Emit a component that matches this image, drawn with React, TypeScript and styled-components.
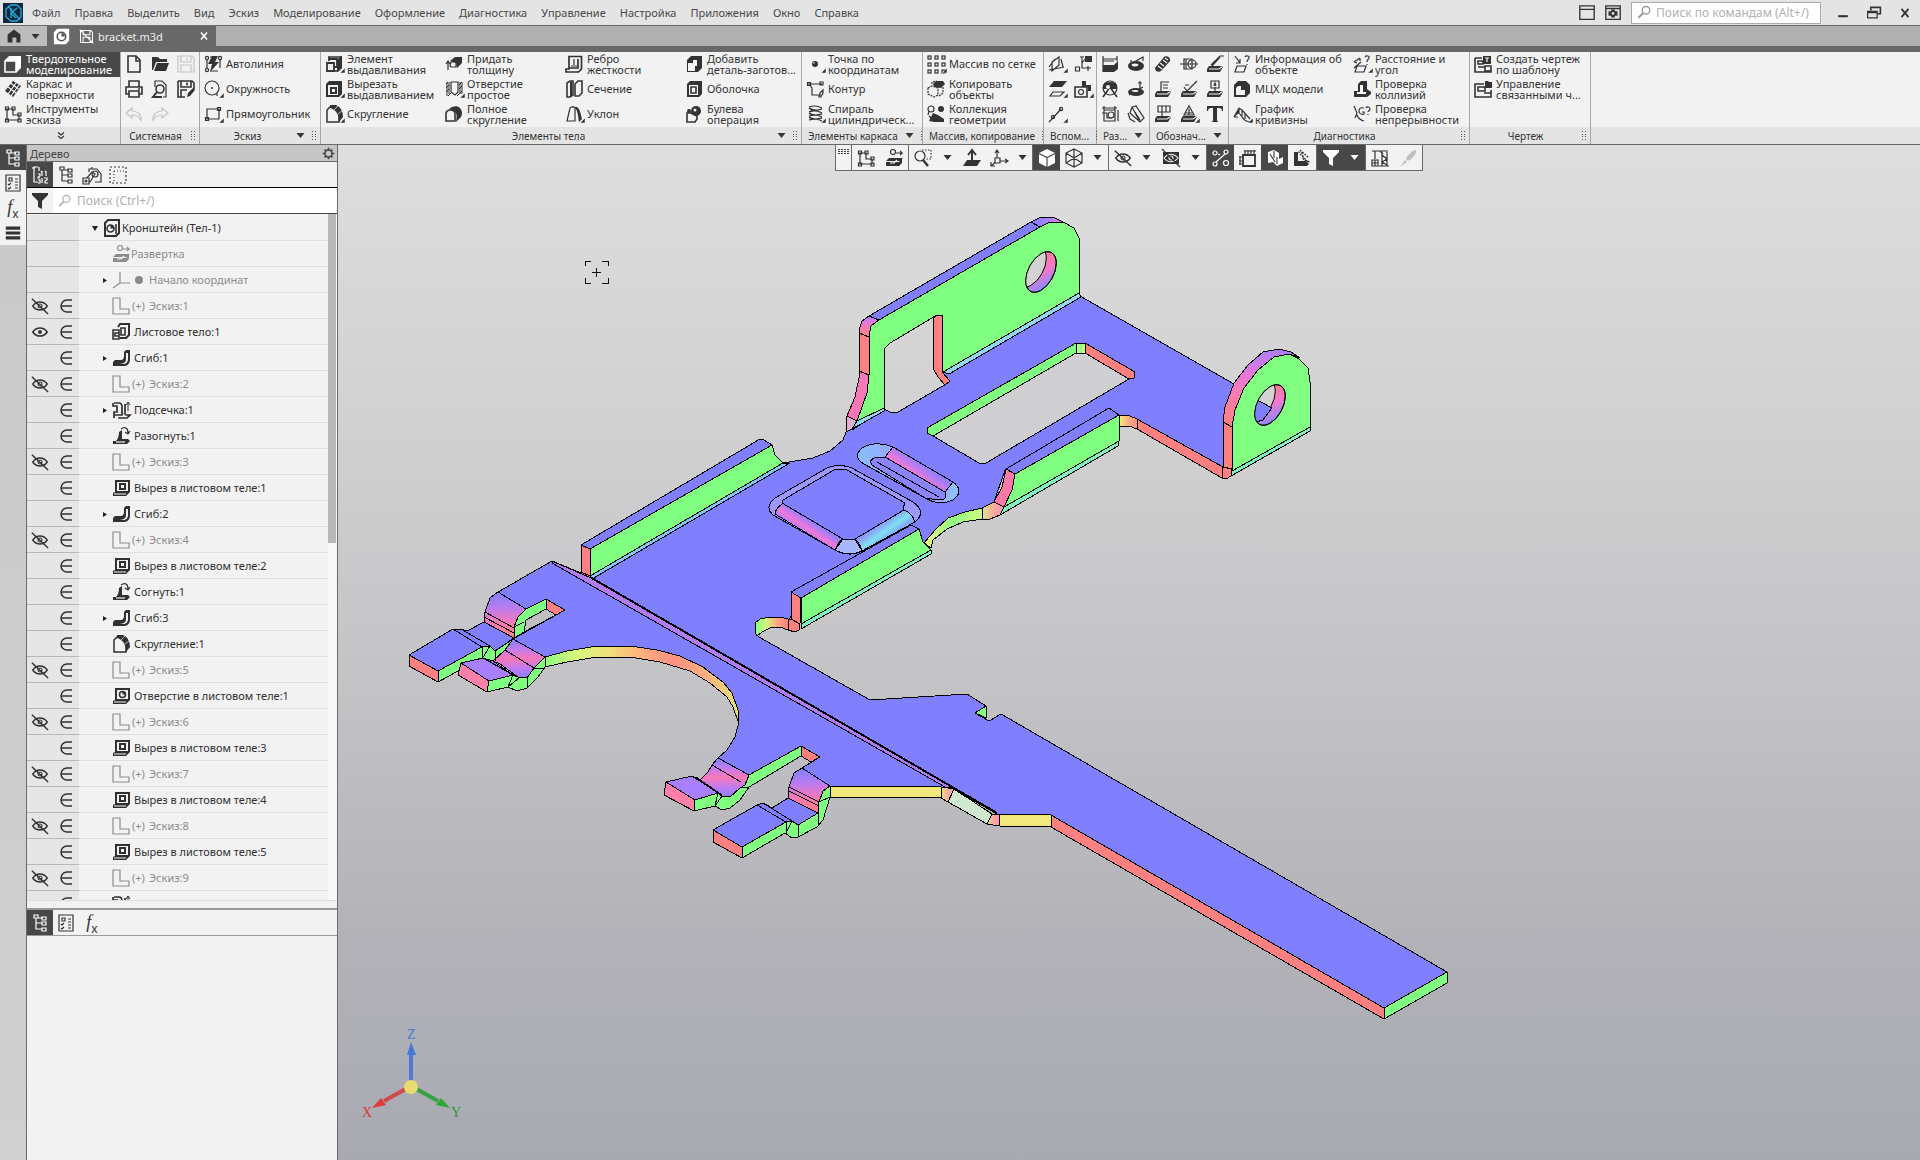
import React from "react";
import styled, { createGlobalStyle, css } from "styled-components";

const INK = "#333333";
const DARK = "#484848";
const LINE = "#6a6a6a";

const GlobalStyle = createGlobalStyle`
  *, *::before, *::after { box-sizing: border-box; }
  body { margin: 0; }
  body, button, input { font-family: "Noto Sans", "Open Sans", sans-serif; font-size: 11px; color: ${INK}; }
  button { border: 0; padding: 0; background: none; text-align: left; }
  svg { display: block; flex: none; }
`;

/* ---------- icons, all on a 20x20 grid ---------- */

const F = { fill: "currentColor", stroke: "none" };
const paper = "#f4f4f4";

const icons: Record<string, React.ReactNode> = {
  solid: <><path {...F} d="M2 6 6 2h12v12l-4 4H2z" /><path d="M6 3h11v11l-3 3H4z" fill="#fff" stroke="none" /><path d="M2 7h11v11H2z" fill="#484848" stroke="#fff" strokeWidth="1.6" /></>,
  surface: <><path {...F} d="M10 2 18 7 10 18 2 12z" /><path stroke={paper} d="M7.500 4 15.500 10M5 8l8 6M13 4 5 15M16 6 8 17" /></>,
  sketchTools: <path d="M4 5v11h12v-5h-6V5zM2.500 3h3v3h-3zM2.500 15h3v3h-3zM15 15h3v3h-3zM15 9h3v3h-3zM9 3h3v3H9z" />,
  newDoc: <path d="M4 2h8l4 4v12H4zM12 2v5h4" strokeWidth="1.600" />,
  open: <path {...F} d="M2 3h6l2 2h7v3H6l-3 8H2zM7 9h12l-3 8H4z" />,
  save: <path d="M2 2h14l2 2v14H2zM5 2v6h10V2M5 18v-7h10v7M11 3.500v3" />,
  print: <path d="M5 8V2h10v6M5 15H2V8h16v7h-3M5 12h10v6H5zM14 10h2" strokeWidth="1.600" />,
  preview: <><path d="M5 8V2h7l4 4v12h-3" /><circle cx="10" cy="10" r="4" strokeWidth="1.600" /><path d="M7 13l-4 5h9" strokeWidth="2" /></>,
  saveAs: <><path d="M2 2h14l2 2v6M5 2v6h10V2M2 2v16h7M5 18v-7h6M11 3.500v3" strokeWidth="1.600" /><path {...F} d="M11 18l1-4 5-5 2 2-5 6z" /></>,
  undo: <path d="M8 4 2 9l6 5v-3c5 0 8 2 9 6 1-7-4-10-9-10z" />,
  redo: <path d="M12 4l6 5-6 5v-3c-5 0-8 2-9 6-1-7 4-10 9-10z" />,
  autoline: <><path {...F} d="M9 2h6l-3 6h4L7 18l2-8H5z" /><path d="M4 6v8M17 6v8M7 3h3M7 17h8" /><circle cx="4" cy="4" r="1.600" /><circle cx="4" cy="16" r="1.600" /><circle cx="17" cy="4" r="1.600" /></>,
  circle: <><circle cx="9" cy="9" r="7" /><circle cx="9" cy="9" r="1" {...F} /><path d="M14 14v3" /></>,
  rect: <path d="M4 5h12v10H4zM2.500 13.500h3v3h-3zM14.500 3.500h3v3h-3z" />,
  extrude: <><path d="M4 3h13v11l-3 3h-4" strokeWidth="1.600" /><path {...F} d="M13 6l4-4h1v12l-5 4z" /><path d="M3 9h7v8H3zM5 3v4M5 5h8v8h-3" strokeWidth="1.800" /></>,
  cut: <><path {...F} d="M2 5 5 2h13v13l-3 3H2z" /><path d="M4 6h10v10H4z" fill={paper} stroke="none" /><path d="M7 9h5v5H7z" strokeWidth="2" /></>,
  fillet: <><path d="M3 18V6l4-4h2c4 3 6 6 6 10v6z" strokeWidth="1.500" /><path {...F} d="M6 1h6c5 2 7 7 7 12l-4 5c0-8-3-12-9-14z" /><path d="M10 6l4-4M14 10l4-3" stroke={paper} strokeWidth="0.700" /></>,
  thicken: <><path {...F} d="M6 7 11 3h7v6l-5 5-1-5z" /><path d="M7 8h5v5H7l-1-1zM4 8v8M2 10l2-3 2 3" /></>,
  holeTool: <><path d="M3 3v14M5 3v12M16 3v12M18 3v12M2 5l2-2M2 9l3-3M2 13l3-3M15 6l3-3M15 10l3-3M4 17l3-3M13 17l5-5" strokeWidth="1" /><path d="M7 3h7v10l-3 3-4-3z" fill={paper} /></>,
  fullFillet: <><path d="M2 17V9c1-4 8-4 9 0v8z" strokeWidth="1.600" /><path {...F} d="M5 5c3-3 8-4 11-1 3 4 2 7 1 9l-5 5c1-6 1-9-2-11-2-1-4-2-5-2z" /></>,
  rib: <><path d="M5 2.500h12.500V15l-3 3H2v-3h3zM5 14h9V5" strokeWidth="1.700" /><path d="M10 5v6M7 12h6" /></>,
  section: <><path d="M3 4 6 2h3v14l-3 2H3zM11 5l3-3h4v12l-3 3h-4z" strokeWidth="1.600" /><path d="M7 3v14" strokeWidth="2" /></>,
  draft: <><path d="M3 17 6 4c2-2 4-2 5 0v13z" /><path {...F} d="M6 3h7c3 2 4 8 5 12l-3 3c-1-6-1-11-4-14z" /></>,
  addPart: <><path {...F} d="M3 6 7 2h11v12l-4 4H3z" /><path d="M4 9h5V6h4v6h-2v5H4z" fill={paper} stroke="none" /></>,
  shell: <><path {...F} d="M3 5 6 2h12v13l-3 3H3z" /><path d="M5 6h9v10H5z" fill={paper} stroke="none" /><path d="M7 8h5v6H7z" strokeWidth="1.600" /></>,
  boolean: <><path d="M3 9h4l6 3v3l-2 3H3z" strokeWidth="1.600" /><circle cx="12" cy="7" r="5" {...F} /><circle cx="11" cy="6" r="1.500" fill={paper} stroke="none" /><circle cx="5" cy="7" r="2" {...F} /></>,
  point: <><circle cx="10" cy="10" r="3" {...F} /><circle cx="9" cy="9" r="0.800" fill={paper} stroke="none" /></>,
  contour: <path d="M17 5H4l3 4v7h9M2.500 3.500h3v3h-3zM15 3h3v3h-3zM15 14l3-3v3l-2 4h-2z" />,
  spiral: <path d="M4 3c5-2 11 0 13 1M4 4c3 3 11 2 13 1M4 8c5-3 11 0 13 1M4 9c3 3 11 2 13 1M4 12c5-2 11 0 13 1M4 13c3 3 11 2 13 1M4 16c5-2 11 0 13 1M17 5 4 8M17 10 4 12M17 14 4 16" />,
  array: <>{[3, 10, 17].map((x) => [3, 10, 17].map((y) => <rect key={`${x}${y}`} x={x - 1} y={y - 1} width="3" height="3" />))}</>,
  copy: <><path d="M2 9l4-2 6 2v7l-4 2-6-3zM6 5V3l5-1M17 8v6l-4 3" strokeDasharray="2 1" /><path {...F} d="M7 5l3-3h7l2 3-4 4-7-1z" /></>,
  collection: <><circle cx="5" cy="5" r="3" /><path d="M3 7 2 11" /><circle cx="15" cy="5" r="3" {...F} /><path {...F} d="M7 9l5 2 6 4v3H8l-5-1z" /><path d="M3 12l5 5" /></>,
  plane1: <path d="M5 8 12 3v8l-7 6zM2 16l15-3M14 5l2 8M2 13l6-8" />,
  plane2: <><path {...F} d="M7 2h13l-5 6H2z" /><path d="M6 13h11l-4 4H3z" /></>,
  axisPt: <><path d="M4 16 14 5M2 18l2-2" /><circle cx="6" cy="13" r="1.600" /><circle cx="14" cy="5" r="1.600" /></>,
  lcs: <><path d="M9 4v10h9M9 9l4-5M2.500 13h4v4h-4zM15 12v5" /><path {...F} d="M12 2h7v6h-7z" /><path d="M7 3h4" /></>,
  camera: <><path d="M2 8h12v10H2z" strokeWidth="1.600" /><circle cx="8" cy="13" r="2.500" /><path {...F} d="M9 2h4v4h5v6h-3V8H9z" /></>,
  dimLin: <><path d="M3 2v16M17 2v5M3 5h14M3 7h11" /><path {...F} d="M3 11h11l4-4v8l-4 3H3z" /></>,
  dimRad: <><path d="M3 11l14-8v4M5 8v-2" /><ellipse cx="10" cy="12" rx="8" ry="5" {...F} /><ellipse cx="9" cy="11" rx="4" ry="2" fill={paper} /></>,
  dimAng: <><circle cx="10" cy="9" r="7" /><path d="M10 8 3 18M10 8l7 10" strokeWidth="1.600" /><path {...F} d="M3 6c2-4 12-4 14 0v4H3z" /><circle cx="8" cy="8" r="2" fill={paper} stroke="none" /></>,
  dimDia: <><path d="M14 2v9M12 4h4M3 16l14-8" /><ellipse cx="10" cy="13" rx="8" ry="4" {...F} /><ellipse cx="9" cy="12" rx="4" ry="1.600" fill={paper} /></>,
  dimAuto: <><path d="M4 6h11v11H4zM4 2v4M15 2v4M2 4h15M18 6v11M2 9h5v5h5" /><circle cx="11" cy="11" r="3" /></>,
  dimNote: <path d="M6 3l4-1 8 12-4 4L4 9zM6 3l8 15M9 8l5 8M2 9l2 6 5 3" />,
  screw: <><path {...F} d="M2 14 11 3c3-2 7 1 6 4L8 17c-3 2-6 0-6-3z" /><path d="M5 12l4 3M7 9l4 3M10 6l4 3M12 4l3 2" stroke={paper} /></>,
  cylinder: <><path d="M5 5h8v10H5z" /><path d="M1 10h18M7 5v10" /><circle cx="13" cy="10" r="4" /></>,
  plate: <path {...F} d="M4 12h12l2 1-3 5H2v-3z" />,
  letterT: <path {...F} d="M2 2h16v5h-1c0-2-1-3-3-3h-2v12c0 1 1 2 2 2H6c1 0 2-1 2-2V4H6C4 4 3 5 3 7H2z" />,
  info: <path d="M3 2l5 7M8 5v4H4M5 12h9l-2 6H3zM13 3c1-2 5-1 4 1s-2 2-2 4M15 10v1" />,
  mcx: <><path {...F} d="M2 6 6 2h8l4 4v8l-4 4H2z" /><path d="M4 9l2-2h3v4h4v5H4z" fill={paper} stroke="none" /></>,
  graph: <path d="M2 13 7 4l3 2 8 9M2 13c4-5 5-5 8 0s5 4 8 5M4 11l3-5M7 9V5M10 12V6M13 15V9M2 13h4" />,
  distance: <path d="M2 8l6-4M2 8l3 1M8 4v3M5 12h9l-2 6H3zM13 3c1-2 5-1 4 1s-2 2-2 4M15 10v1M2 14 9 8" />,
  collision: <><path {...F} d="M2 12h4V5l3-3h6v8l4 3v2l-4 3H2z" /><path d="M8 6h3v7h3v2H5v-2h3z" fill={paper} stroke="none" /></>,
  continuity: <path d="M2 2l3 7-2 5M5 11c1 3 3 5 7 6M12 4c-4-1-5 1-5 3s2 4 5 3V8h-2M14 4c1-2 4-1 4 1s-2 2-2 3M16 10v1" />,
  drawing1: <><path d="M2 4h7M2 4v14h16v-6M5 7h5v3H5zM5 13h7M12 12v5h6v-5z" strokeWidth="1.600" /><path {...F} d="M10 2h8v8h-8z" /><path d="M12 4h4M14 4v4" stroke={paper} /></>,
  drawing2: <><path d="M11 5H2v13h16v-7M5 8h7v4H5zM11 14h7" strokeWidth="1.600" /><path {...F} d="M12 2h3l1 1h3v6h-7z" /></>,
  home: <path {...F} d="M10 2 18 8v10h-5v-6H8v6H2V8z" />,
  docPart: <><path d="M3 5 6 2h11v13l-3 3H3z" strokeWidth="2" /><path d="M14 6v10" strokeWidth="1.600" /><circle cx="8.500" cy="10.500" r="3.500" strokeWidth="1.600" /><path {...F} d="M8.500 7a3.500 3.500 0 0 1 3.500 3.500H8.500z" /></>,
  docTab: <><path {...F} d="M1 5 5 1h14v14l-4 4H1z" /><circle cx="10" cy="10" r="5" stroke="#555555" strokeWidth="1.800" /><path d="M10 6a4 4 0 0 1 4 4h-4z" fill="#555555" stroke="none" /></>,
  noSave: <path d="M3 3h12l2 2v12H3zM6 3v5h8V3M6 17v-6h8v6M2 2l16 16" />,
  tree: <path d="M6 5v11h6M6 10h6M7 5h6M4 2h4v3H4zM12 4h4v3h-4zM12 9h4v3h-4zM12 15h4v3h-4z" />,
  params: <path d="M3 2h14v16H3zM6 5h3v3H6zM12 6h3M12 9h3M5 11l1 1 2-2M5 15l1 1 2-2M12 12h3M12 15h3" />,
  bars: <path {...F} d="M1 2h18v4H1zM1 8h18v4H1zM1 14h18v4H1z" />,
  gear: <><circle cx="10" cy="10" r="5.500" strokeWidth="2.400" /><path strokeWidth="2.600" d="M10 1v4M10 15v4M1 10h4M15 10h4M4 4l2 2M14 14l2 2M16 4l-2 2M6 14l-2 2" /></>,
  treeNum: <path d="M8 2H4v15h4M2 3h3M12 6v5M11 7l1-1M16 6v5M15 7l1-1M12 13v5M14 13h3v2l-2 1v2h3M9 2v4M8 9h2v2l-2 1v1h2M8 15h2v3H8" />,
  treeDocs: <><path d="M7 7V4h8l4 5v8h-6M10 4V2M4 14l6-7 3 2-5 8z" /><circle cx="13" cy="9" r="3" /><path d="M1 13h6v6H1z" fill={paper} /><circle cx="4" cy="16" r="1" /></>,
  marquee: <><path d="M2 2h16v16H2z" strokeDasharray="2 2" /><path d="M6 6h12M6 6v12" strokeDasharray="1 2" /></>,
  funnel: <path {...F} d="M2 2h16v2l-6 6v8l-4-2v-6L2 4z" />,
  search: <><circle cx="12" cy="7" r="5" strokeWidth="1.800" /><path d="M8 11l-6 6" strokeWidth="2.600" /></>,
  eye: <><path d="M2 10c4-6 12-6 16 0-4 6-12 6-16 0z" strokeWidth="1.800" /><circle cx="10" cy="10" r="2.200" {...F} /></>,
  eyeOff: <><path d="M2 10c4-6 12-6 16 0-4 6-12 6-16 0z" strokeWidth="1.600" /><circle cx="10" cy="10" r="2.200" /><path d="M1 2l18 17" strokeWidth="1.600" /></>,
  member: <path d="M16 4h-5a6 6 0 0 0 0 12h5M5 10h11" strokeWidth="1.500" />,
  sketch: <path d="M2 2h7v11h9v5H2z" />,
  origin: <path d="M9 2v11h10M9 13l-7 5" />,
  unfold: <><circle cx="9" cy="4" r="2.500" /><path d="M12 5h6l-2-2M18 5l-2 2" /><path {...F} d="M5 10h14l-3 3H2zM2 14h13l3-3v4l-3 3H2z" /><path d="M6 15h4l3-3" stroke={paper} /></>,
  sheet: <><path d="M7 5 9 2h9v11l-3 3H9" strokeWidth="2" /><path d="M10 6h4v7h-4zM2 8h6v9H2zM4 11h4v3H4z" strokeWidth="1.600" /></>,
  bend: <><path {...F} d="M2 14l2-2h6c2 0 3-2 3-4V4l2-2h4v9c0 4-2 7-6 7H2z" /><path d="M15 5h2v6c0 3-2 5-5 5H4c6 0 11 0 11-5z" fill={paper} stroke="none" /></>,
  jog: <><path d="M3 3h5c3 0 3 2 3 4v8H3v3M2 3v3h4v6H3v3M13 13l2 2h4l-3 3H7M14 4v9" strokeWidth="1.700" /><path d="M17 11V2M15 5l2-3 2 3" strokeWidth="1" /></>,
  unbend: <><path {...F} d="M2 15h3c2-2 3-5 3-9l3-2v9h6l2 2-3 3H2z" /><path d="M10 3c4-3 7-1 7 4M14 6l3 2 2-3" /><path d="M5 16h9" stroke={paper} /></>,
  sheetCut: <><path {...F} d="M4 2h15v12l-4 4H2v-3l2-1z" /><path d="M6 4h11v9H6z" fill={paper} stroke="none" /><path d="M3 16h12" stroke={paper} strokeWidth="1" /><path d="M9 6h5v5H9z" strokeWidth="2" /></>,
  sheetHole: <><path {...F} d="M4 2h15v12l-4 4H2v-3l2-1z" /><path d="M6 4h11v9H6z" fill={paper} stroke="none" /><path d="M3 16h12" stroke={paper} strokeWidth="1" /><circle cx="11.500" cy="8.500" r="3" strokeWidth="1.600" /><path {...F} d="M11.500 5.500a3 3 0 0 1 3 3h-3z" /></>,
  window: <path d="M2 2h16v15H2zM2 6h16" strokeWidth="1.500" />,
  windowGear: <><path d="M2 2h16v15H2zM2 5h16" strokeWidth="1.500" /><path {...F} d="M8 6h4v2h3v5h-3v2H8v-2H5V8h3z" /><circle cx="10" cy="10.500" r="1.500" fill="#e4e4e4" stroke="none" /></>,
  minimise: <path d="M4 14h12" strokeWidth="2.600" />,
  restore: <><path d="M6 7V3h12v8h-4" strokeWidth="2" /><path d="M2 8h12v8H2zM2 9.500h12" strokeWidth="1.500" /></>,
  close: <path d="M5 4l10 12M15 4 5 16" strokeWidth="2.600" />,
  zoomArea: <><circle cx="7" cy="8" r="5" /><path d="M10 12l5 6" strokeWidth="2.400" /><path d="M9 2h9v9h-5" strokeDasharray="1.500 1.500" /></>,
  normalTo: <><path d="M10 15V3M6 7l4-5 4 5" strokeWidth="2" /><path {...F} d="M5 12h14l-4 6H1z" /></>,
  axes: <><path d="M8 13V3M8 13h10M8 13l-6 5M6 5l2-3 2 3M16 11l3 2-3 2M2 14v4h4" /><path d="M6 10h5v5H6z" fill={paper} /></>,
  cube: <><path {...F} d="M10 1 18 5v10l-8 4-8-4V5z" /><path d="M2 5.500l8 4 8-4M10 9.500V19" stroke="#484848" /></>,
  cubeWire: <path d="M10 1 18 5v10l-8 4-8-4V5zM2 5l16 10M18 5 2 15M10 1v18" />,
  eyeBox: <><path {...F} d="M2 4h16v12H2z" /><path d="M3 10c4-5 10-5 14 0-4 5-10 5-14 0z" stroke={paper} /><circle cx="10" cy="10" r="2" stroke={paper} /><path d="M1 1l18 18" /></>,
  snap: <><circle cx="4" cy="5" r="2" /><circle cx="15" cy="4" r="2" /><circle cx="4" cy="16" r="2" /><circle cx="15" cy="15" r="2.500" /><path d="M5 14 14 6M7 6l2 1" /></>,
  sizeBox: <><path d="M5 7h12v11H5z" strokeWidth="1.800" /><path d="M7 2v4M10 2v4M13 2v4M16 2v4M6 3h12M2 8v9M1 9h4M1 13h4M1 16h4" /></>,
  solidSec: <><path {...F} d="M3 4l6-2 5 3v6l4-2v6l-6 3-4-4-5 1z" /><path d="M5 6l5 8M9 3v7M12 9v7" stroke="#484848" /></>,
  sketchShow: <><path {...F} d="M2 4h4v9h8l3 3-2 2H2z" /><path d="M6 4c5 0 5 3 5 6s5 2 7 5M8 2l9 8M8 6l8 8" strokeDasharray="2 1" /></>,
  crane: <><path d="M2 3h16M5 3v8M10 3l3 3M12 4v14M17 4v14M12 7l5 4-5 3 5 3M9 18h10" /><path d="M2 12h6v6H2zM5 12v6M2 15h6" /></>,
  brush: <path {...F} d="M18 2c-4 0-9 6-10 9l2 2c4-2 9-7 8-11zM7 12l2 2-7 5z" />,
};

const Glyph = styled.svg<{ $s?: number }>`
  width: ${(p) => p.$s ?? 20}px;
  height: ${(p) => p.$s ?? 20}px;
  overflow: visible;
  fill: none;
  stroke: currentColor;
  stroke-width: 1.2;
`;

function Icon({ n, s, more }: { n: string; s?: number; more?: boolean }) {
  return (
    <Glyph viewBox="0 0 20 20" $s={s} aria-hidden>
      {icons[n]}
      {more && <path d="M21 14v5h-5z" fill="currentColor" stroke={paper} strokeWidth="0.500" />}
    </Glyph>
  );
}

const plateMarks: Record<string, string> = {
  base: "M6 11 15 2h4M7 12l8-9",
  line: "M8 12V3h8M10 6h5M10 9h5",
  rough: "M5 8l3 4L18 2M6 6h4",
  datum: "M10 12V8M6 2h8v7H6zM9 7l1-3 1 3",
  tol: "M9 12V8M5 2h12v6H5zM9 2v6M13 2v6",
  mark: "M10 2 5 11h10zM10 5v6M7 9h6",
};

function PlateIcon({ n, more }: { n: string; more?: boolean }) {
  return (
    <Glyph viewBox="0 0 20 20" aria-hidden>
      <path d={plateMarks[n]} />
      {icons.plate}
      <path d="M4 15h10l3-2" stroke={paper} />
      {more && <path d="M21 14v5h-5z" fill="currentColor" stroke={paper} strokeWidth="0.500" />}
    </Glyph>
  );
}

const Caret = styled.svg.attrs({ viewBox: "0 0 8 5", "aria-hidden": true, children: <path d="M0 0h8L4 5z" /> })`
  width: 9px;
  height: 5px;
  fill: currentColor;
`;

/* ---------- frame ---------- */

const Shell = styled.div`
  height: 100vh;
  display: flex;
  flex-direction: column;
  overflow: hidden;
  background: #cacaca;
`;

const MenuBar = styled.header`
  display: flex;
  flex: none;
  align-items: center;
  height: 26px;
  background: #e4e4e4;
  border-bottom: 1px solid ${LINE};
`;

const Logo = styled.svg`
  width: 20px;
  height: 20px;
  margin: 0 2px 0 3px;
`;

const MenuItem = styled.button`
  padding: 0 7px;
  line-height: 24px;
  color: #484848;
`;

const Spacer = styled.span`
  flex: 1;
`;

const WindowTools = styled.div`
  display: flex;
  align-items: center;
  gap: 8px;
  margin-right: 9px;
`;

const CommandSearch = styled.label`
  display: flex;
  align-items: center;
  gap: 4px;
  width: 190px;
  height: 22px;
  margin-right: 6px;
  padding: 0 5px;
  border: 1px solid #aaaaaa;
  background: #ffffff;
  color: #999999;
`;

const BareInput = styled.input`
  flex: 1;
  min-width: 0;
  border: 0;
  padding: 0;
  outline: 0;
  background: transparent;
  font-size: 12px;
  &::placeholder { color: #b0b0b0; opacity: 1; }
`;

const WindowButton = styled.button`
  display: grid;
  place-items: center;
  width: 31px;
  height: 24px;
`;

const TabStrip = styled.nav`
  display: flex;
  flex: none;
  height: 26px;
  background: #b0b0b0;
  border-bottom: 6px solid #686868;
`;

const HomeButton = styled.button`
  display: flex;
  align-items: center;
  justify-content: space-between;
  width: 47px;
  padding: 0 7px 0 6px;
  background: #bcbcbc;
`;

const DocTab = styled.div`
  display: flex;
  align-items: center;
  width: 169px;
  padding: 0 6px;
  gap: 8px;
  background: #686868;
  color: #ffffff;
`;

const TabTitle = styled.span`
  flex: 1;
  margin-left: -5px;
  color: #eeeeee;
`;

const TabClose = styled.button`
  color: #ffffff;
`;

/* ---------- ribbon ---------- */

const Ribbon = styled.section`
  display: flex;
  flex: none;
  background: #f2f2f2;
  border-bottom: 1px solid ${LINE};
`;

const Group = styled.div<{ $w: number }>`
  display: flex;
  flex-direction: column;
  flex: none;
  width: ${(p) => p.$w}px;
  border-right: 1px solid #a8a8a8;
`;

const Cells = styled.div<{ $cell: number }>`
  display: grid;
  grid-auto-flow: column;
  grid-template-rows: repeat(3, 25px);
  grid-auto-columns: ${(p) => p.$cell}px;
`;

const Tool = styled.button<{ $on?: boolean }>`
  display: flex;
  align-items: center;
  gap: 3px;
  padding: 0 0 2px 3px;
  line-height: 11px;
  white-space: nowrap;
  ${(p) => p.$on && css`background: ${DARK}; color: #ffffff;`}
`;

const SmallTool = styled.button<{ $off?: boolean }>`
  display: grid;
  place-items: center;
  padding-bottom: 2px;
  ${(p) => p.$off && css`color: #c4c4c4;`}
`;

const GroupFoot = styled.div`
  display: flex;
  align-items: center;
  gap: 7px;
  height: 17px;
  padding: 0 4px 0 6px;
  background: #e4e4e4;
  font-size: 10px;
  white-space: nowrap;
`;

const FootName = styled.span`
  display: flex;
  flex: 1;
  justify-content: center;
`;

const RibbonRest = styled.div`
  flex: 1;
  background: linear-gradient(#f2f2f2 75px, #e4e4e4 75px);
`;

const Grip = styled.svg.attrs({
  viewBox: "0 0 4 9",
  "aria-hidden": true,
  children: <path d="M0 0h1v1H0zM3 0h1v1H3zM0 3h1v1H0zM3 3h1v1H3zM0 5h1v1H0zM3 5h1v1H3zM0 8h1v1H0zM3 8h1v1H3z" />,
})`
  width: 4px;
  height: 9px;
  fill: #555555;
`;

type ToolDef = [icon: string, text: string, more?: boolean];

function Tools({ list, on }: { list: ToolDef[]; on?: boolean }) {
  return (
    <Cells $cell={120}>
      {list.map(([icon, text, more], i) => (
        <Tool key={text} $on={on && i === 0}>
          <Icon n={icon} more={more} />
          <span>
            {text.split("|").map((t, j) => (
              <React.Fragment key={t}>{j > 0 && <br />}{t}</React.Fragment>
            ))}
          </span>
        </Tool>
      ))}
    </Cells>
  );
}

function Foot({ name, menu }: { name: string; menu?: boolean }) {
  return (
    <GroupFoot>
      <FootName>{name}</FootName>
      {menu && <Caret />}
      <Grip />
    </GroupFoot>
  );
}

const modes: ToolDef[] = [
  ["solid", "Твердотельное|моделирование"],
  ["surface", "Каркас и|поверхности"],
  ["sketchTools", "Инструменты|эскиза"],
];
const fileTools: [icon: string, label: string, off?: boolean][] = [
  ["newDoc", "Создать"],
  ["print", "Печать"],
  ["undo", "Отменить", true],
  ["open", "Открыть"],
  ["preview", "Просмотр"],
  ["redo", "Повторить", true],
  ["save", "Сохранить", true],
  ["saveAs", "Сохранить как"],
];
const sketchTools: ToolDef[] = [
  ["autoline", "Автолиния"],
  ["circle", "Окружность", true],
  ["rect", "Прямоугольник", true],
];
const bodyTools: ToolDef[] = [
  ["extrude", "Элемент|выдавливания", true],
  ["cut", "Вырезать|выдавливанием", true],
  ["fillet", "Скругление", true],
  ["thicken", "Придать|толщину"],
  ["holeTool", "Отверстие|простое", true],
  ["fullFillet", "Полное|скругление"],
  ["rib", "Ребро|жесткости"],
  ["section", "Сечение"],
  ["draft", "Уклон", true],
  ["addPart", "Добавить|деталь-заготов..."],
  ["shell", "Оболочка"],
  ["boolean", "Булева|операция"],
];
const frameTools: ToolDef[] = [
  ["point", "Точка по|координатам", true],
  ["contour", "Контур"],
  ["spiral", "Спираль|цилиндрическ...", true],
];
const arrayTools: ToolDef[] = [
  ["array", "Массив по сетке", true],
  ["copy", "Копировать|объекты"],
  ["collection", "Коллекция|геометрии"],
];
const sizeTools: [icon: string, label: string][] = [
  ["dimLin", "Линейный размер"],
  ["dimAng", "Угловой размер"],
  ["dimAuto", "Авторазмер"],
  ["dimRad", "Радиальный размер"],
  ["dimDia", "Диаметральный размер"],
  ["dimNote", "Размер фаски"],
];
const checkTools: ToolDef[] = [
  ["info", "Информация об|объекте"],
  ["mcx", "МЦХ модели"],
  ["graph", "График|кривизны", true],
  ["distance", "Расстояние и|угол", true],
  ["collision", "Проверка|коллизий"],
  ["continuity", "Проверка|непрерывности"],
];
const drawTools: ToolDef[] = [
  ["drawing1", "Создать чертеж|по шаблону"],
  ["drawing2", "Управление|связанными ч..."],
];

function RibbonBar() {
  return (
    <Ribbon>
      <Group $w={121}>
        <Tools list={modes} on />
        <GroupFoot>
          <FootName>
            <Glyph viewBox="0 0 20 20" $s={10} aria-label="Развернуть">
              <path d="M4 3l6 5 6-5M4 10l6 5 6-5" strokeWidth="2.400" />
            </Glyph>
          </FootName>
        </GroupFoot>
      </Group>
      <Group $w={79}>
        <Cells $cell={26}>
          {fileTools.map(([n, label, off]) => (
            <SmallTool key={n} aria-label={label} $off={off}><Icon n={n} /></SmallTool>
          ))}
        </Cells>
        <Foot name="Системная" />
      </Group>
      <Group $w={121}>
        <Tools list={sketchTools} />
        <Foot name="Эскиз" menu />
      </Group>
      <Group $w={481}>
        <Tools list={bodyTools} />
        <Foot name="Элементы тела" menu />
      </Group>
      <Group $w={121}>
        <Tools list={frameTools} />
        <Foot name="Элементы каркаса" menu />
      </Group>
      <Group $w={121}>
        <Tools list={arrayTools} />
        <Foot name="Массив, копирование" />
      </Group>
      <Group $w={53}>
        <Cells $cell={26}>
          <SmallTool aria-label="Плоскость"><Icon n="plane1" more /></SmallTool>
          <SmallTool aria-label="Смещённая плоскость"><Icon n="plane2" more /></SmallTool>
          <SmallTool aria-label="Ось"><Icon n="axisPt" more /></SmallTool>
          <SmallTool aria-label="ЛСК"><Icon n="lcs" /></SmallTool>
          <SmallTool aria-label="Контрольная точка"><Icon n="camera" more /></SmallTool>
        </Cells>
        <Foot name="Вспом..." />
      </Group>
      <Group $w={53}>
        <Cells $cell={26}>
          {sizeTools.map(([n, label]) => (
            <SmallTool key={n} aria-label={label}><Icon n={n} /></SmallTool>
          ))}
        </Cells>
        <Foot name="Раз..." menu />
      </Group>
      <Group $w={79}>
        <Cells $cell={26}>
          <SmallTool aria-label="Резьба"><Icon n="screw" /></SmallTool>
          <SmallTool aria-label="Линия-выноска"><PlateIcon n="line" /></SmallTool>
          <SmallTool aria-label="Допуск формы"><PlateIcon n="tol" /></SmallTool>
          <SmallTool aria-label="Осевая"><Icon n="cylinder" /></SmallTool>
          <SmallTool aria-label="Шероховатость"><PlateIcon n="rough" /></SmallTool>
          <SmallTool aria-label="Клеймо"><PlateIcon n="mark" more /></SmallTool>
          <SmallTool aria-label="Позиция"><PlateIcon n="base" /></SmallTool>
          <SmallTool aria-label="База"><PlateIcon n="datum" /></SmallTool>
          <SmallTool aria-label="Текст"><Icon n="letterT" /></SmallTool>
        </Cells>
        <Foot name="Обознач..." menu />
      </Group>
      <Group $w={241}>
        <Tools list={checkTools} />
        <Foot name="Диагностика" />
      </Group>
      <Group $w={121}>
        <Tools list={drawTools} />
        <Foot name="Чертеж" />
      </Group>
      <RibbonRest />
    </Ribbon>
  );
}

/* ---------- tree ---------- */

const Work = styled.main`
  flex: 1;
  display: grid;
  grid-template-columns: 26px 312px minmax(0, 1fr);
  grid-template-rows: minmax(0, 1fr);
  min-height: 0;
`;

const Rail = styled.nav`
  display: flex;
  flex-direction: column;
  background: linear-gradient(#c9c9c9, #d0d0d0);
`;

const RailButton = styled.button<{ $on?: boolean }>`
  display: grid;
  place-items: center;
  width: 26px;
  height: 25px;
  background: ${(p) => (p.$on ? DARK : "#f2f2f2")};
  color: ${(p) => (p.$on ? "#ffffff" : INK)};
`;

const FxMark = styled.span`
  font: italic 18px/18px "Liberation Serif", serif;
  color: ${INK};
  sub { font: 12px/8px "Noto Sans", sans-serif; }
`;

const Panel = styled.aside`
  display: grid;
  grid-template-rows: minmax(0, 1fr) 224px;
  min-height: 0;
  border: solid ${LINE};
  border-width: 0 1px;
  background: #f2f2f2;
`;

const TreePane = styled.section`
  display: flex;
  flex-direction: column;
  min-height: 0;
`;

const PanelHead = styled.header`
  display: flex;
  flex: none;
  align-items: center;
  justify-content: space-between;
  height: 17px;
  padding: 0 2px 0 3px;
  background: #c6c6c6;
  border-bottom: 1px solid ${LINE};
  color: #444444;
`;

const Row = styled.div`
  display: flex;
  flex: none;
  align-items: center;
`;

const ModeRow = styled(Row)`
  height: 26px;
  border-bottom: 1px solid #000000;
`;

const FilterRow = styled(Row)`
  height: 26px;
  border-bottom: 1px solid #444444;
  background: #ffffff;
  color: #b0b0b0;
`;

const TreeSearch = styled.label`
  display: flex;
  align-items: center;
  flex: 1;
  gap: 5px;
  padding-left: 5px;
`;

const ListWrap = styled.div`
  display: flex;
  flex: 1;
  min-height: 0;
  margin-bottom: 7px;
  border-bottom: 1px solid #dcdcdc;
`;

const List = styled.ul`
  flex: 1;
  min-width: 0;
  margin: 0;
  padding: 1px 0 0;
  list-style: none;
  overflow: hidden;
`;

const Item = styled.li<{ $dim?: boolean }>`
  display: flex;
  height: 26px;
  color: ${(p) => (p.$dim ? "#8c8c8c" : "#303030")};
`;

const Gutter = styled.div`
  display: grid;
  grid-template-columns: 26px 26px;
  background: #e6e6e6;
  border-bottom: 1px solid #b8b8b8;
  width: 52px;
  color: ${INK};
`;

const GutterButton = styled.button`
  display: grid;
  place-items: center;
`;

const Entry = styled.div<{ $root?: boolean }>`
  display: flex;
  flex: 1;
  align-items: center;
  padding-left: ${(p) => (p.$root ? 7 : 16)}px;
  border-bottom: 1px solid #e0e0e0;
  white-space: nowrap;
`;

const Arrow = styled.svg`
  width: 16px;
  height: 8px;
  fill: #222222;
`;

const Name = styled.span<{ $gap: number }>`
  margin-left: ${(p) => p.$gap}px;
`;

const Plus = styled.span`
  margin-left: 1px;
  width: 16px;
`;

const Dot = styled.i`
  width: 8px;
  height: 8px;
  margin: 0 2px 0 4px;
  border-radius: 50%;
  background: #888888;
`;

const Scrollbar = styled.div`
  width: 9px;
  background: #f8f8f8;
`;

const Thumb = styled.div`
  width: 8px;
  height: 48%;
  background: #b8b8b8;
`;

const LowerPane = styled.section`
  background: #f2f2f2;
`;

const BottomTabs = styled(Row)`
  height: 28px;
  border: solid #999999;
  border-width: 2px 0 1px;
`;

type Eye = "on" | "off";
type Node = { icon: string; name: string; eye?: Eye; member?: boolean; arrow?: "open" | "shut"; dim?: boolean };

const sk = (n: number): Node => ({ icon: "sketch", name: `Эскиз:${n}`, eye: "off", member: true, dim: true });
const op = (icon: string, name: string, arrow?: "shut", eye?: Eye): Node => ({ icon, name, member: true, arrow, eye });

const nodes: Node[] = [
  { icon: "docPart", name: "Кронштейн (Тел-1)", arrow: "open" },
  { icon: "unfold", name: "Развертка", dim: true },
  { icon: "origin", name: "Начало координат", arrow: "shut", dim: true },
  sk(1),
  op("sheet", "Листовое тело:1", undefined, "on"),
  op("bend", "Сгиб:1", "shut"),
  sk(2),
  op("jog", "Подсечка:1", "shut"),
  op("unbend", "Разогнуть:1"),
  sk(3),
  op("sheetCut", "Вырез в листовом теле:1"),
  op("bend", "Сгиб:2", "shut"),
  sk(4),
  op("sheetCut", "Вырез в листовом теле:2"),
  op("unbend", "Согнуть:1"),
  op("bend", "Сгиб:3", "shut"),
  op("fillet", "Скругление:1"),
  sk(5),
  op("sheetHole", "Отверстие в листовом теле:1"),
  sk(6),
  op("sheetCut", "Вырез в листовом теле:3"),
  sk(7),
  op("sheetCut", "Вырез в листовом теле:4"),
  sk(8),
  op("sheetCut", "Вырез в листовом теле:5"),
  sk(9),
  op("jog", "Подсечка:2"),
];

const nameGap: Record<string, number> = { docPart: 0, unfold: 0, origin: 4, sketch: 1 };

function TreeItem({ node, root }: { node: Node; root: boolean }) {
  return (
    <Item $dim={node.dim}>
      <Gutter>
        <GutterButton aria-label="Видимость">
          {node.eye && <Icon n={node.eye === "on" ? "eye" : "eyeOff"} s={18} />}
        </GutterButton>
        <GutterButton aria-label="Включение в расчёт">{node.member && <Icon n="member" />}</GutterButton>
      </Gutter>
      <Entry $root={root}>
        <Arrow viewBox="0 0 16 8" aria-hidden>
          {node.arrow === "open" && <path d="M6 2h6L9 7z" />}
          {node.arrow === "shut" && <path d="M8 2v5l4-2.500z" />}
        </Arrow>
        <Icon n={node.icon} />
        {node.icon === "sketch" && <Plus>(+)</Plus>}
        {node.icon === "origin" && <Dot />}
        <Name $gap={nameGap[node.icon] ?? 3}>{node.name}</Name>
      </Entry>
    </Item>
  );
}

function TreePanel() {
  return (
    <Panel>
      <TreePane>
        <PanelHead>Дерево<Icon n="gear" s={13} /></PanelHead>
        <ModeRow>
          <RailButton $on aria-label="Нумерация"><Icon n="treeNum" /></RailButton>
          <RailButton aria-label="Структура"><Icon n="tree" /></RailButton>
          <RailButton aria-label="Документы"><Icon n="treeDocs" /></RailButton>
          <RailButton aria-label="Область"><Icon n="marquee" /></RailButton>
        </ModeRow>
        <FilterRow>
          <RailButton aria-label="Фильтр"><Icon n="funnel" /></RailButton>
          <TreeSearch>
            <Icon n="search" s={14} />
            <BareInput placeholder="Поиск (Ctrl+/)" aria-label="Поиск" />
          </TreeSearch>
        </FilterRow>
        <ListWrap>
          <List>
            {nodes.map((n, i) => <TreeItem key={n.name} node={n} root={i === 0} />)}
          </List>
          <Scrollbar><Thumb /></Scrollbar>
        </ListWrap>
        <BottomTabs>
          <RailButton $on aria-label="Дерево"><Icon n="tree" /></RailButton>
          <RailButton aria-label="Параметры"><Icon n="params" /></RailButton>
          <RailButton aria-label="Переменные"><FxMark>f<sub>x</sub></FxMark></RailButton>
        </BottomTabs>
      </TreePane>
      <LowerPane />
    </Panel>
  );
}

/* ---------- viewport ---------- */

const Viewport = styled.section`
  position: relative;
  min-width: 0;
  min-height: 0;
  background: linear-gradient(#dedede 0%, #d2d2d3 25%, #c2c2c5 55%, #b2b2b8 78%, #a9a9b2 100%);
`;

const Scene = styled.svg`
  width: 100%;
  height: 100%;
  text { font-family: "Liberation Serif", serif; font-size: 14px; }
`;

const ViewBar = styled.div`
  position: absolute;
  top: 0;
  left: 497px;
  display: flex;
  height: 26px;
  border: 1px solid ${LINE};
  border-top: 0;
  background: ${LINE};
  gap: 1px;
`;

const Section = styled.div<{ $on?: boolean }>`
  display: flex;
  background: ${(p) => (p.$on ? DARK : "#f2f2f2")};
  color: ${(p) => (p.$on ? "#ffffff" : INK)};
`;

const ViewButton = styled.button<{ $on?: boolean; $w?: number; $off?: boolean }>`
  display: grid;
  place-items: center;
  width: ${(p) => p.$w ?? 27}px;
  background: ${(p) => (p.$on ? DARK : "transparent")};
  color: ${(p) => (p.$on ? "#ffffff" : p.$off ? "#c0c0c0" : "inherit")};
`;

const Handle = styled.svg`
  width: 15px;
  height: 12px;
  fill: #444444;
`;

const P = "#8080ff";
const G = "#80ff80";
const R = "#ff8080";
const Y = "#f3e87c";
const C = "#80f0c0";

const grads: [string, boolean, string[]][] = [
  ["bendDown", true, ["#8080ff", "#b87cf0", "#f878b8", "#ff8080"]],
  ["bendPink", true, ["#8080ff", "#c07cf0", "#f878b8", "#c07cf0", "#8c80ff"]],
  ["side", true, ["#a880f8", "#e878d8", "#ff7ea0", "#ff8080"]],
  ["arch", false, ["#90ff80", "#d8f87c", "#f0e07c", "#ffb07c", "#ff9080", "#ffb080", "#e8e078"]],
  ["notch", false, ["#80ff80", "#d0f87c", "#ffa880", "#ff8080"]],
  ["edge", false, ["#f0f080", "#90ff80", "#d0f880"]],
  ["mix", false, ["#d8e890", "#f8b098", "#ff90c0"]],
  ["yel", false, ["#f0f080", "#ffb080", "#ff9080"]],
  ["cap", false, ["#88c0f8", "#98a8ff", "#b490ff", "#88c8f8"]],
  ["hole", true, ["#ff8090", "#f878c8", "#8888ff"]],
  ["foot", false, ["#8080ff", "#a880ff", "#d880f0"]],
];

type Shape = [fill: string, points: string];

const shapes: Shape[] = [
  /* flat faces */
  [P, "1080,296 1234,384 1262,392 1230,476 1222,467 1137,419 1119,415 1005,470 994,502 982,508 965,512 948,518 936,529 924,543 931,550 801,598 789,620 780,617 770,617 760,619 755,623 755,632 759,637 870,700 967,694 986,706 975,713 989,721 1001,714 1447,972 1384,1008 1051,815 997,814 953,789 941,787 830,786 802,768 820,757 801,746 749,775 718,758 727,750 735,737 739,722 738,710 732,693 723,682 703,667 680,656 657,650 630,646 597,646 567,651 545,657 513,639 556,615 565,610 546,599 526,609 498,592 552,561 581,573 591,577 783,463 813,458 830,451 843,440 846,432 884,409 890,412 898,412 948,383 943,372 1080,296"],
  /* rear wall */
  [G, "852,430 857,420 867,393 869,375 869,336 871,326 879,320 1040,227 1050,222 1063,222 1074,228 1079,238 1079,293 943,372 942,315 937,315 890,343 885,348 884,354 884,409"],
  [P, "869,316 879,320 1040,227 1031,222"],
  ["url(#foot)", "1031,222 1041,217 1053,217 1063,222 1050,222 1040,227"],
  ["url(#side)", "869,316 862,321 860,327 859,333 869,337 871,326 879,320"],
  [R, "859,333 869,337 869,375 859,371"],
  ["#f878b8", "859,371 869,375 867,393 857,421 847,416 855,397 859,378"],
  ["#e0b0d0", "847,416 857,421 852,429 846,432"],
  ["#90d8f0", "857,421 884,408 884,411 852,429"],
  ["#90d8f0", "943,372 1079,293 1081,297 949,374"],
  [R, "933,318 938,315 942,315 942,372 950,381 945,385 938,377 933,368"],
  /* window */
  [G, "927,428 1076,343 1076,353 933,436 927,433"],
  ["url(#edge)", "1076,343 1085,343 1085,353 1076,353"],
  [R, "1085,343 1135,372 1134,378 1129,379 1085,353"],
  ["#cfcfd1", "933,436 1076,353 1085,353 1129,379 986,463 979,463"],
  /* right edge */
  ["url(#yel)", "1119,415 1130,416 1137,419 1137,429 1129,426 1120,426"],
  [R, "1137,419 1223,467 1222,478 1137,429"],
  /* front right flange */
  [P, "1006,469 1109,408 1119,415 1015,474"],
  [G, "1015,474 1119,415 1119,441 1004,507 1012,490"],
  [C, "1119,441 1118,446 1000,515 1004,507"],
  ["url(#edge)", "924,543 936,529 948,518 965,512 982,508 982,519 963,522 947,529 933,540 931,548"],
  ["url(#mix)", "982,508 994,502 1004,507 1000,515 990,519 982,519"],
  ["#ff78a8", "1006,469 1015,474 1012,490 1004,507 994,502 1002,487"],
  /* left flange */
  [P, "581,545 760,439 764,440 772,445 590,549"],
  [G, "590,549 772,445 775,455 783,463 590,576"],
  ["#80c8f8", "590,576 783,463 790,463 592,579"],
  [R, "581,545 590,549 590,576 581,572"],
  ["#ff9090", "581,572 590,576 592,579 581,575"],
  ["#b07cf0", "552,561 591,578 954,788 945,787 552,563"],
  /* arch */
  ["url(#arch)", "545,657 567,651 597,646 630,646 657,650 680,656 703,667 723,682 732,693 738,710 738,721 733,707 727,697 710,683 690,671 660,662 630,657 597,657 567,662 545,667"],
  /* tab 1 */
  [G, "526,609 546,599 546,609 526,620 524,632 514,638 514,627 518,617"],
  [R, "546,599 565,610 556,615 546,609"],
  ["#c0c0c3", "546,609 556,615 524,632 526,620"],
  ["url(#bendDown)", "498,592 526,609 518,617 514,627 514,638 484,622 485,612 490,598"],
  [P, "484,622 514,638 495,651 487,646 438,671 409,655 453,629 461,629 467,631"],
  [G, "438,671 482,647 490,646 495,651 513,639 505,651 495,661 482,659 458,671 438,682"],
  [R, "409,655 438,671 438,682 409,666"],
  /* tab 2 */
  ["url(#bendPink)", "513,639 545,657 540,667 527,678 518,677 500,664 493,661 505,650"],
  ["#a880ff", "461,663 483,658 493,661 513,675 489,681"],
  ["#ff80a8", "461,663 489,681 487,692 458,675"],
  [G, "489,681 513,675 518,677 527,678 534,668 545,657 545,667 538,677 527,688 517,691 508,687 487,692"],
  /* tab 3 */
  [G, "695,800 718,793 722,796 730,797 740,788 749,775 801,746 801,756 749,787 740,800 730,808 722,810 715,806 694,811"],
  [R, "801,746 820,757 811,762 801,756"],
  ["url(#bendPink)", "718,758 749,775 745,785 740,788 730,797 722,796 700,780 708,772 712,765"],
  ["#a880ff", "666,782 692,776 700,780 718,793 695,800"],
  ["#ff80a8", "666,782 695,800 694,811 664,795"],
  /* tab 4 */
  [G, "830,786 830,797 827,807 823,820 817,827 798,837 792,838 785,833 742,858 742,847 786,822 792,821 798,825 818,813 819,802 823,791"],
  ["url(#bendDown)", "802,768 830,786 823,791 819,802 818,813 788,798 789,787 794,773"],
  [P, "713,830 757,805 763,803 772,808 788,798 818,813 798,825 792,821 786,822 742,847"],
  [R, "713,830 742,847 742,858 713,842"],
  /* front edges */
  [Y, "830,786 941,787 941,798 830,797"],
  ["url(#mix)", "941,787 954,789 948,802 941,798"],
  ["#d0e8d0", "954,789 992,814 987,824 948,802"],
  ["url(#mix)", "992,814 999,814 999,826 987,824"],
  [Y, "999,814 1051,815 1051,827 999,826"],
  [R, "1051,815 1384,1008 1384,1019 1051,827"],
  [G, "1384,1008 1447,972 1447,983 1384,1019"],
  [G, "975,713 986,706 986,718"],
  /* right tab */
  ["url(#side)", "1223,422 1225,407 1234,383 1248,365 1263,352 1279,349 1291,352 1300,358 1289,354 1274,357 1258,370 1244,388 1235,410 1232,427"],
  [R, "1223,467 1223,422 1232,427 1232,471"],
  [G, "1232,471 1232,427 1235,410 1244,388 1258,370 1274,357 1289,354 1299,359 1308,368 1310,382 1310,427"],
  [C, "1232,471 1310,427 1310,431 1231,476"],
  [R, "1223,467 1232,469 1231,476 1226,479 1222,478"],
];

/* drawn after the embossed pocket, which the flange partly hides */
const middleFlange: Shape[] = [
  [P, "791,592 911,525 919,529 801,598"],
  [G, "801,598 919,529 923,542 931,550 801,624"],
  [C, "801,624 931,550 931,554 801,629"],
  [R, "791,592 801,598 800,624 791,619"],
  [R, "788,619 791,619 800,624 799,630 795,632 788,630"],
  ["url(#notch)", "755,623 760,619 770,617 780,617 788,619 788,630 780,627 770,628 762,632 757,636 755,632"],
];

const creases =
  "M453 629l29 18M461 629l29 17M482 647v12M490 646l-8 13M495 651v10M485 612l29 16M484 617l30 16M518 617l8-8M514 627l10-5M505 650l29 18M483 658l30 17M487 660l30 17M513 675l-5 12M508 687l12-10M527 678v10M534 668h11" +
  "M757 805l29 17M763 803l29 18M786 822v11M792 821l-6 12M798 825v12M789 787l30 15M789 791l30 15M819 802l11-5M818 813v13M712 765l29 17M692 776l26 17M696 777l26 18M718 793l-3 13M722 796l-7 10M740 788l9-1";

function Faces({ list }: { list: Shape[] }) {
  return <>{list.map(([fill, points]) => <polygon key={points} points={points} fill={fill} />)}</>;
}

function Hole({ cx, cy, behind }: { cx: number; cy: number; behind?: boolean }) {
  const id = `hole${cx}`;
  const m = `matrix(15.300 -8.800 0 18.300 ${cx} ${cy})`;
  return (
    <g>
      <clipPath id={id}><circle r="1" transform={m} /></clipPath>
      <circle r="1" transform={m} fill="url(#hole)" vectorEffect="non-scaling-stroke" />
      <g clipPath={`url(#${id})`}>
        <circle r="1" transform={`matrix(15.300 -8.800 0 18.300 ${cx - 10} ${cy - 5})`} fill="#d2d2d3" vectorEffect="non-scaling-stroke" />
        {behind && <path d={`M${cx - 20} ${cy - 9}l22 12-9 12-14 4z`} fill={P} />}
      </g>
      <circle r="1" transform={m} fill="none" vectorEffect="non-scaling-stroke" />
    </g>
  );
}

function Model() {
  return (
    <g shapeRendering="crispEdges" stroke="#000000" strokeWidth="1" strokeLinejoin="round">
      <Faces list={shapes} />
      <path d="M590 577 997 813" strokeWidth="2" />
      <path d={creases} fill="none" />
      <Hole cx={1041} cy={272} />
      <Hole cx={1270} cy={405} behind />

      {/* embossed square */}
      <path d="M827 468q12-5 25 0l61 34q14 10 2 20l-55 30q-12 5-25-2l-62-35q-9-8 2-17z" fill="#9c98ff" />
      <path d="M784 503q-8 4-9 11l60 36q3-8 8-11z" fill="url(#pocketLeft)" />
      <path d="M855 539l49-29q8 3 11 12l-53 29q-2-8-7-12z" fill="url(#pocketRight)" />
      <path d="M843 539h12l7 12q-13 6-27-1z" fill="#a8b8ff" />
      <path d="M834 470q6-2 13 0l58 33q-2 4-1 7l-49 29h-12l-56-33q-6-3-4-6z" fill={P} />

      {/* embossed slot */}
      <path d="M862 448q14-8 31-1l60 35q12 9 0 18-13 6-26-1l-63-35q-12-7-2-16z" fill="url(#cap)" />
      <path d="M893 447 953 482l-8 10-60-35z" fill="url(#slotTop)" />
      <path d="M872 465q-4-6 5-8h8l60 35q3 8-6 8l-14-2z" fill="#8c84ff" />
      <path d="M877 462l62 35" />
      <Faces list={middleFlange} />
    </g>
  );
}

function Triad() {
  return (
    <g strokeWidth="4" fill="none">
      <path d="M411 1086v-32" stroke="#4f7bd0" />
      <path d="M411 1086l-27 15" stroke="#d04a4a" />
      <path d="M411 1086l27 15" stroke="#35a045" />
      <path d="M411 1042l5 13h-9z" fill="#4478d8" />
      <path d="M372 1108l9-10 5 7z" fill="#e03c3c" />
      <path d="M450 1108l-14-3 5-7z" fill="#28a838" />
      <circle cx="411" cy="1087" r="7" fill="#e8dc70" />
      <text x="407" y="1039" fill="#4478d8">Z</text>
      <text x="362" y="1117" fill="#d83c3c">X</text>
      <text x="451" y="1117" fill="#28983c">Y</text>
    </g>
  );
}

function View() {
  return (
    <Viewport>
      <Scene viewBox="338 145 1582 1015" role="img" aria-label="Модель кронштейна">
        <defs>
          {grads.map(([id, vertical, stops]) => (
            <linearGradient key={id} id={id} x1="0" y1="0" x2={vertical ? "0" : "1"} y2={vertical ? "1" : "0"}>
              {stops.map((c, i) => <stop key={i} offset={i / (stops.length - 1)} stopColor={c} />)}
            </linearGradient>
          ))}
          <linearGradient id="pocketLeft" gradientUnits="userSpaceOnUse" x1="812" y1="521" x2="804" y2="533">
            <stop offset="0" stopColor="#9080ff" /><stop offset="0.600" stopColor="#f078d8" /><stop offset="1" stopColor="#b080f8" />
          </linearGradient>
          <linearGradient id="pocketRight" gradientUnits="userSpaceOnUse" x1="878" y1="524" x2="888" y2="538">
            <stop offset="0" stopColor="#8c90ff" /><stop offset="0.600" stopColor="#80e0f0" /><stop offset="1" stopColor="#80a8ff" />
          </linearGradient>
          <linearGradient id="slotTop" gradientUnits="userSpaceOnUse" x1="923" y1="464" x2="915" y2="475">
            <stop offset="0" stopColor="#9080ff" /><stop offset="1" stopColor="#f078d8" />
          </linearGradient>
        </defs>
        <Model />
        <Triad />
        <path d="M585 266v-5h6M602 261h6v5M608 278v5h-6M591 283h-6v-5M592 272h9M596 268v9" stroke="#111111" fill="none" shapeRendering="crispEdges" />
      </Scene>
      <ViewBar>
        <Section>
          <Handle viewBox="0 0 15 12" aria-hidden>
            {[3, 6, 9, 12].map((x) => [4, 6, 8].map((y) => <rect key={`${x}-${y}`} x={x - 1} y={y} width="2" height="1" />))}
          </Handle>
        </Section>
        <Section>
          <ViewButton $w={28} aria-label="Эскиз"><Icon n="sketchTools" /></ViewButton>
          <ViewButton $w={28} aria-label="Развертка"><Icon n="unfold" /></ViewButton>
        </Section>
        <Section>
          <ViewButton aria-label="Масштаб"><Icon n="zoomArea" /></ViewButton>
          <ViewButton $w={22} aria-label="Ещё"><Caret /></ViewButton>
          <ViewButton aria-label="Нормально к"><Icon n="normalTo" /></ViewButton>
          <ViewButton aria-label="Ориентация"><Icon n="axes" /></ViewButton>
          <ViewButton $w={20} aria-label="Ещё"><Caret /></ViewButton>
        </Section>
        <Section>
          <ViewButton $on aria-label="Полутоновое"><Icon n="cube" /></ViewButton>
          <ViewButton aria-label="Каркас"><Icon n="cubeWire" /></ViewButton>
          <ViewButton $w={21} aria-label="Ещё"><Caret /></ViewButton>
        </Section>
        <Section>
          <ViewButton aria-label="Скрыть"><Icon n="eyeOff" s={18} /></ViewButton>
          <ViewButton $w={21} aria-label="Ещё"><Caret /></ViewButton>
          <ViewButton aria-label="Скрыть объекты"><Icon n="eyeBox" /></ViewButton>
          <ViewButton $w={22} aria-label="Ещё"><Caret /></ViewButton>
        </Section>
        <Section>
          <ViewButton $on aria-label="Привязки"><Icon n="snap" /></ViewButton>
          <ViewButton aria-label="Размеры"><Icon n="sizeBox" /></ViewButton>
          <ViewButton $on aria-label="Сечение"><Icon n="solidSec" /></ViewButton>
          <ViewButton $w={28} aria-label="Эскизы"><Icon n="sketchShow" /></ViewButton>
        </Section>
        <Section $on>
          <ViewButton aria-label="Фильтр"><Icon n="funnel" /></ViewButton>
          <ViewButton $w={21} aria-label="Ещё"><Caret /></ViewButton>
        </Section>
        <Section>
          <ViewButton $w={28} aria-label="Сборка"><Icon n="crane" /></ViewButton>
          <ViewButton $w={28} $off aria-label="Свойства"><Icon n="brush" /></ViewButton>
        </Section>
      </ViewBar>
    </Viewport>
  );
}

const menu = ["Файл", "Правка", "Выделить", "Вид", "Эскиз", "Моделирование", "Оформление", "Диагностика", "Управление", "Настройка", "Приложения", "Окно", "Справка"];

export default function App() {
  return (
    <Shell>
      <GlobalStyle />
      <MenuBar>
        <Logo viewBox="0 0 20 20" aria-label="КОМПАС">
          <path d="M0 0h20v20H0z" fill="#10283c" />
          <g fill="none" stroke="#2aa8dc" strokeWidth="1.300">
            <path d="M5 3l12 14M3 6v8l5 4h6l4-4V6l-4-4H8z" />
            <path d="M8 5v10M14 5 8 10l5 5" />
          </g>
        </Logo>
        {menu.map((m) => <MenuItem key={m}>{m}</MenuItem>)}
        <Spacer />
        <WindowTools>
          <Icon n="window" s={18} />
          <Icon n="windowGear" s={18} />
        </WindowTools>
        <CommandSearch>
          <Icon n="search" s={15} />
          <BareInput placeholder="Поиск по командам (Alt+/)" aria-label="Поиск по командам" />
        </CommandSearch>
        <WindowButton aria-label="Свернуть"><Icon n="minimise" s={16} /></WindowButton>
        <WindowButton aria-label="Восстановить"><Icon n="restore" s={16} /></WindowButton>
        <WindowButton aria-label="Закрыть"><Icon n="close" s={14} /></WindowButton>
      </MenuBar>
      <TabStrip>
        <HomeButton aria-label="Главная"><Icon n="home" s={16} /><Caret /></HomeButton>
        <DocTab>
          <Icon n="docTab" s={17} />
          <Icon n="noSave" s={17} />
          <TabTitle>bracket.m3d</TabTitle>
          <TabClose aria-label="Закрыть вкладку"><Icon n="close" s={12} /></TabClose>
        </DocTab>
      </TabStrip>
      <RibbonBar />
      <Work>
        <Rail>
          <RailButton $on aria-label="Дерево"><Icon n="tree" /></RailButton>
          <RailButton aria-label="Параметры"><Icon n="params" /></RailButton>
          <RailButton aria-label="Переменные"><FxMark>f<sub>x</sub></FxMark></RailButton>
          <RailButton aria-label="Меню"><Icon n="bars" s={16} /></RailButton>
        </Rail>
        <TreePanel />
        <View />
      </Work>
    </Shell>
  );
}
